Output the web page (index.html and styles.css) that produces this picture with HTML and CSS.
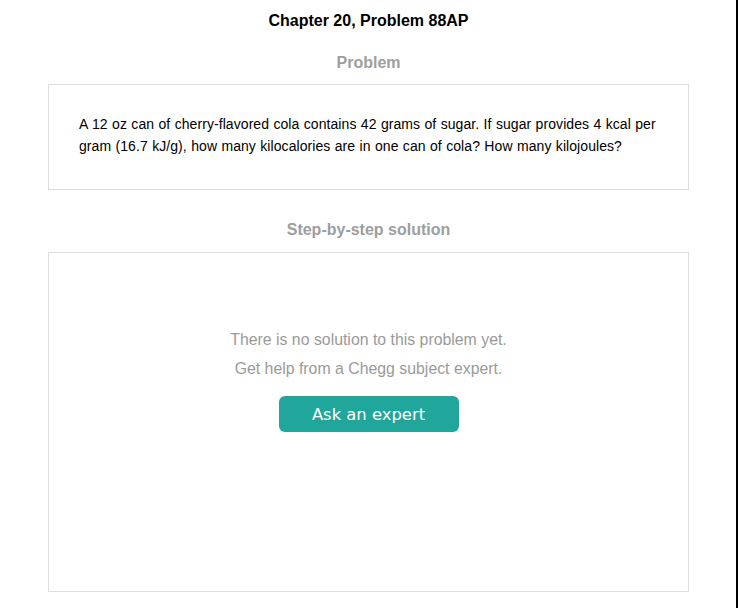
FILE: index.html
```html
<!DOCTYPE html>
<html>
<head>
<meta charset="utf-8">
<link rel="stylesheet" href="styles.css">
</head>
<body>
<div class="page">
  <div class="content">
    <h1 class="title">Chapter 20, Problem 88AP</h1>
    <h2 class="section-head">Problem</h2>
    <div class="box problem-box">
      <p class="problem-text">A 12 oz can of cherry-flavored cola contains 42 grams of sugar. If sugar provides 4 kcal per gram (16.7 kJ/g), how many kilocalories are in one can of cola? How many kilojoules?</p>
    </div>
    <h2 class="section-head step-head">Step-by-step solution</h2>
    <div class="box solution-box">
      <p class="no-sol">There is no solution to this problem yet.</p>
      <p class="no-sol">Get help from a Chegg subject expert.</p>
      <button class="ask-btn">Ask an expert</button>
    </div>
  </div>
</div>
</body>
</html>
```
FILE: styles.css
```css
html, body {
  margin: 0;
  padding: 0;
  height: 100%;
  background: #fff;
}
body {
  font-family: "Liberation Sans", Arial, sans-serif;
  overflow: hidden;
}
.page {
  width: 736px;
  height: 608px;
  border-right: 2px solid #000;
}
.content {
  width: 641px;
  margin-left: 48px;
  padding-top: 11px;
  display: flex;
  flex-direction: column;
}
.title {
  margin: 0;
  font-size: 16px;
  line-height: 20px;
  font-weight: bold;
  color: #000;
  text-align: center;
}
.section-head {
  margin: 22px 0 0;
  font-size: 16px;
  line-height: 20px;
  font-weight: bold;
  color: #9e9e9e;
  text-align: center;
}
.step-head {
  margin-top: 30px;
}
.box {
  border: 1px solid #dddddd;
  box-sizing: border-box;
}
.problem-box {
  margin-top: 11px;
  padding: 28px 30px 32px;
}
.problem-text {
  margin: 0;
  font-size: 14px;
  line-height: 22px;
  letter-spacing: 0.07px;
  word-spacing: 0.4px;
  color: #000;
}
.solution-box {
  margin-top: 12px;
  height: 340px;
  padding-top: 72px;
  display: flex;
  flex-direction: column;
  align-items: center;
}
.no-sol {
  margin: 0;
  font-size: 15.85px;
  line-height: 29px;
  color: #9a9a9a;
}
.ask-btn {
  margin-top: 13px;
  width: 180px;
  height: 36px;
  border: none;
  border-radius: 6px;
  background: #21a69b;
  color: #fff;
  font-family: "DejaVu Sans", Verdana, sans-serif;
  font-size: 16.4px;
  padding: 0;
}
```
